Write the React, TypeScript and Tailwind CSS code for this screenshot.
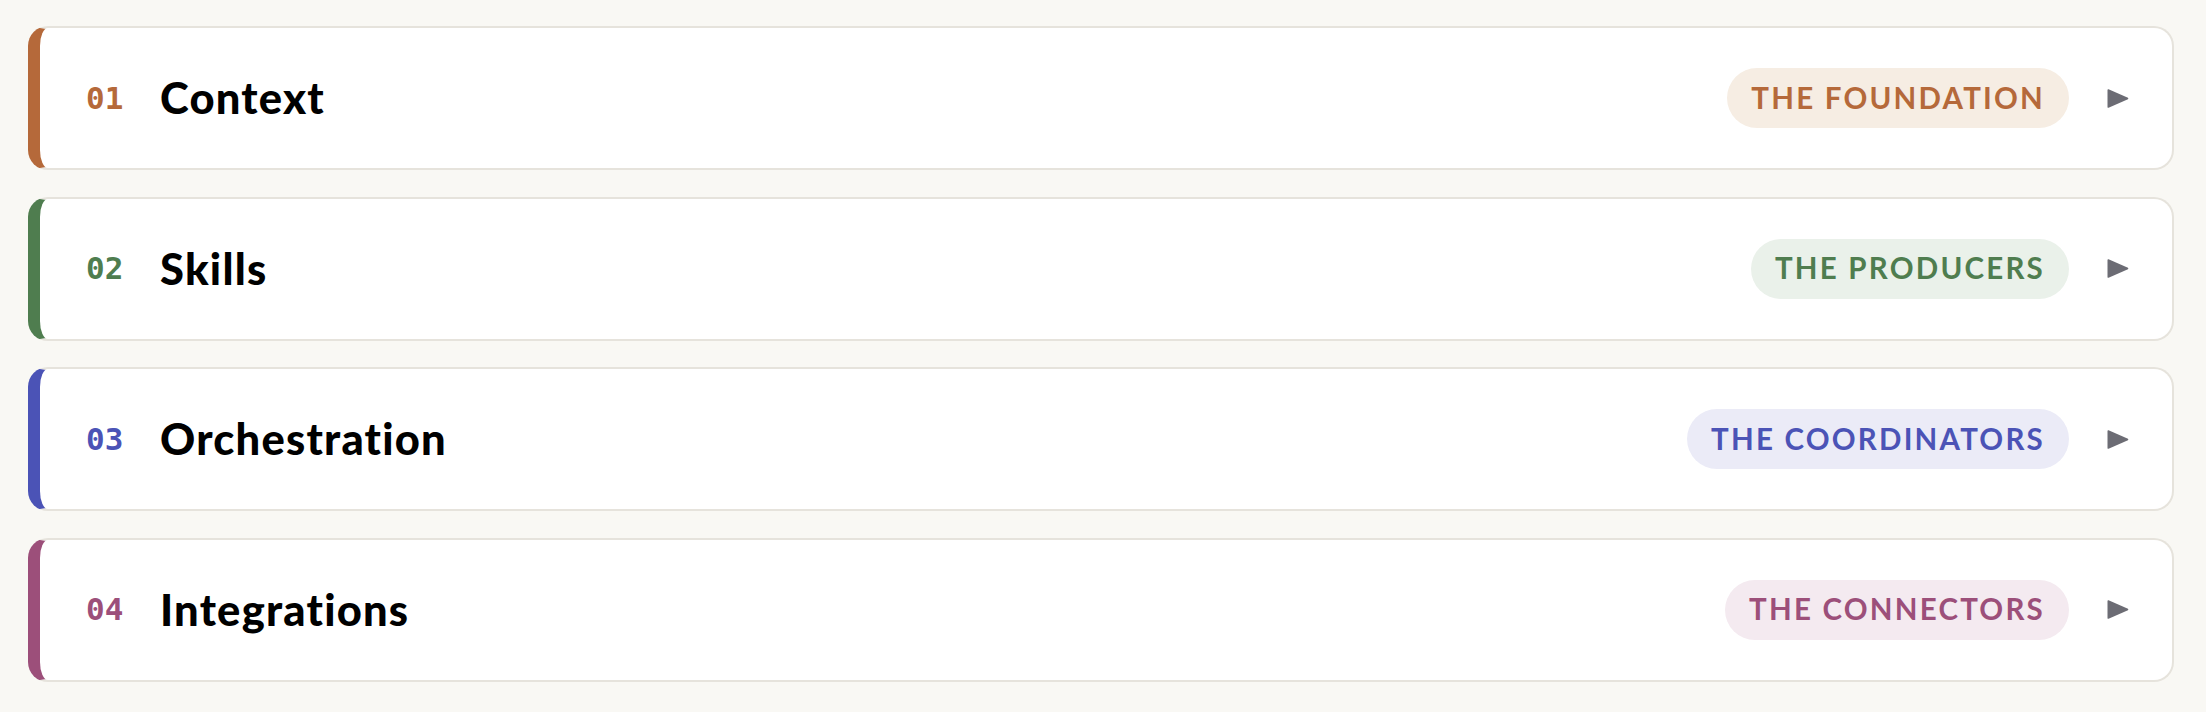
import React from "react";

type Item = {
  n: string;
  title: string;
  badge: string;
  stripe: string;
  text: string;
  bg: string;
};

const items: Item[] = [
  { n: "01", title: "Context", badge: "THE FOUNDATION", stripe: "border-l-[#b5693a]", text: "text-[#b5693a]", bg: "bg-[#f6ede3]" },
  { n: "02", title: "Skills", badge: "THE PRODUCERS", stripe: "border-l-[#4f7d4f]", text: "text-[#4f7d4f]", bg: "bg-[#eaf1ea]" },
  { n: "03", title: "Orchestration", badge: "THE COORDINATORS", stripe: "border-l-[#4b53b6]", text: "text-[#4b53b6]", bg: "bg-[#ebebf7]" },
  { n: "04", title: "Integrations", badge: "THE CONNECTORS", stripe: "border-l-[#9c4f7a]", text: "text-[#9c4f7a]", bg: "bg-[#f4eaf0]" },
];

function Row({ it }: { it: Item }) {
  return (
    <div
      className={`flex h-[144px] items-center rounded-[20px] border-2 border-[#e6e3dc] border-l-[12px] ${it.stripe} bg-white pl-[46px] pr-[43px]`}
    >
      <span
        className={`w-[38px] text-[31px] font-bold leading-none ${it.text}`}
        style={{ fontFamily: '"DejaVu Sans Mono", "Liberation Mono", monospace' }}
      >
        {it.n}
      </span>
      <span
        className="ml-[36px] text-[43.5px] font-black tracking-[0.028em] text-black"
        style={{ fontFamily: 'Lato, "Noto Sans", sans-serif' }}
      >
        {it.title}
      </span>
      <div className="flex-1" />
      <span
        className={`flex h-[60px] items-center rounded-full px-[24px] text-[29.5px] font-bold tracking-[0.075em] ${it.bg} ${it.text}`}
        style={{ fontFamily: 'Lato, "Noto Sans", sans-serif' }}
      >
        {it.badge}
      </span>
      <svg className="ml-[38px]" width="22" height="21" viewBox="0 0 21 20">
        <path d="M1.5 1.2 L20 9.3 Q20.8 10 20 10.7 L1.5 18.8 Q0.5 19.2 0.5 18 V2 Q0.5 0.8 1.5 1.2 Z" fill="#6c6c74" />
      </svg>
    </div>
  );
}

export default function App() {
  return (
    <div className="min-h-[712px] w-full bg-[#f9f8f4] pl-[28px] pr-[32px] pt-[26px]">
      <div className="flex flex-col gap-[26.5px]">
        {items.map((it) => (
          <Row key={it.n} it={it} />
        ))}
      </div>
    </div>
  );
}
